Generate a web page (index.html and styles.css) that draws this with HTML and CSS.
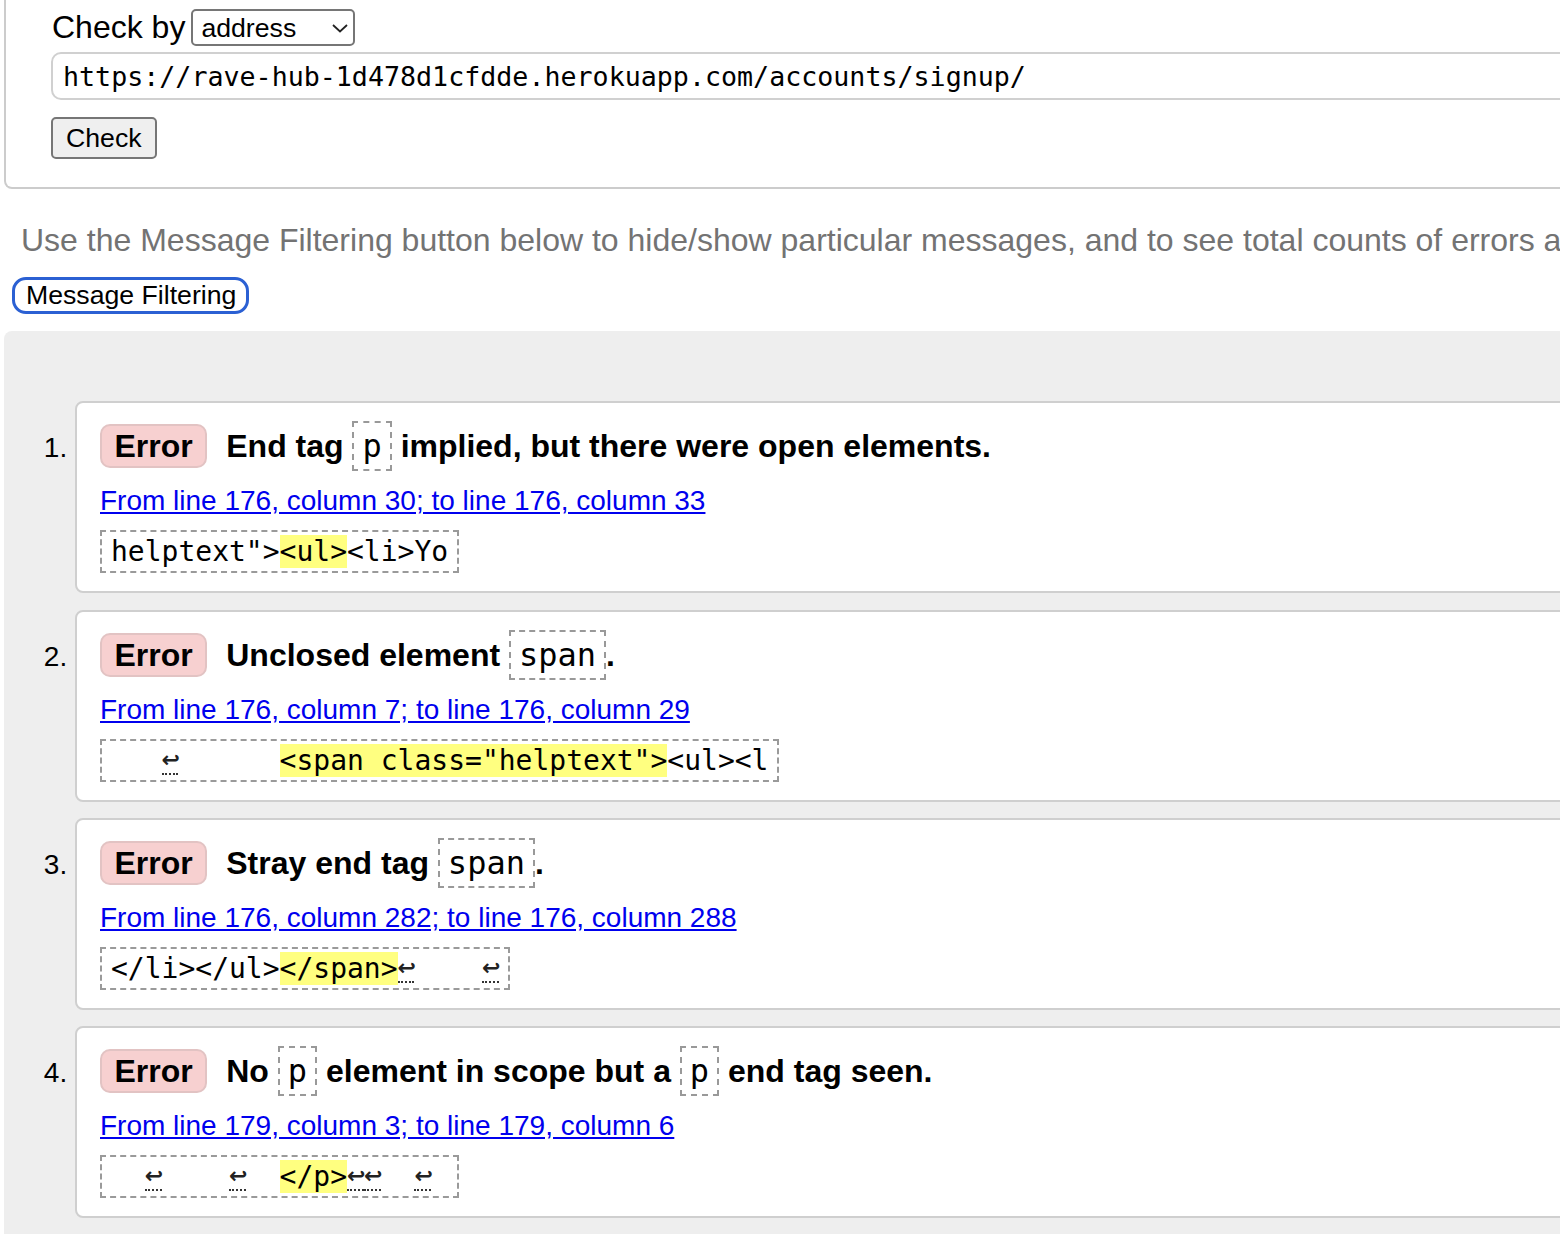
FILE: index.html
```html
<!DOCTYPE html>
<html lang="en">
<head>
<meta charset="utf-8">
<title>Nu Html Checker</title>
<link rel="stylesheet" href="styles.css">
</head>
<body>
<form class="checkform">
  <div class="checkby">
    <label class="checkby-label" for="docselect">Check by</label>
    <span class="selectwrap">
      <select id="docselect" class="doc-select">
        <option>address</option>
      </select>
      <svg class="chevron" width="16" height="9" viewBox="0 0 16 9"><path d="M1 1 L8 7.5 L15 1" fill="none" stroke="#222" stroke-width="1.8"/></svg>
    </span>
  </div>
  <input class="url" type="text" value="https://rave-hub-1d478d1cfdde.herokuapp.com/accounts/signup/">
  <button type="button" class="check-btn">Check</button>
</form>

<p class="note">Use the Message Filtering button below to hide/show particular messages, and to see total counts of errors and warnings.</p>
<button type="button" class="filter-btn">Message Filtering</button>

<div class="results">
  <ol class="messages">
    <li class="card">
      <p class="msg"><strong class="badge">Error</strong><span class="msg-text">End tag <code>p</code> implied, but there were open elements.</span></p>
      <p class="loc"><a href="#l176c33">From line 176, column 30; to line 176, column 33</a></p>
      <p class="extract"><code>helptext"&gt;<mark class="hl">&lt;ul&gt;</mark>&lt;li&gt;Yo</code></p>
    </li>
    <li class="card">
      <p class="msg"><strong class="badge">Error</strong><span class="msg-text">Unclosed element <code>span</code>.</span></p>
      <p class="loc"><a href="#l176c29">From line 176, column 7; to line 176, column 29</a></p>
      <p class="extract"><code>   <b class="lf" title="U+000A">↩</b>      <mark class="hl">&lt;span class="helptext"&gt;</mark>&lt;ul&gt;&lt;l</code></p>
    </li>
    <li class="card">
      <p class="msg"><strong class="badge">Error</strong><span class="msg-text">Stray end tag <code>span</code>.</span></p>
      <p class="loc"><a href="#l176c288">From line 176, column 282; to line 176, column 288</a></p>
      <p class="extract"><code>&lt;/li&gt;&lt;/ul&gt;<mark class="hl">&lt;/span&gt;</mark><b class="lf" title="U+000A">↩</b>    <b class="lf" title="U+000A">↩</b></code></p>
    </li>
    <li class="card">
      <p class="msg"><strong class="badge">Error</strong><span class="msg-text">No <code>p</code> element in scope but a <code>p</code> end tag seen.</span></p>
      <p class="loc"><a href="#l179c6">From line 179, column 3; to line 179, column 6</a></p>
      <p class="extract"><code>  <b class="lf" title="U+000A">↩</b>    <b class="lf" title="U+000A">↩</b>  <mark class="hl">&lt;/p&gt;</mark><b class="lf" title="U+000A">↩</b><b class="lf" title="U+000A">↩</b>  <b class="lf" title="U+000A">↩</b> </code></p>
    </li>
  </ol>
</div>
</body>
</html>
```

FILE: styles.css
```css
html {
  overflow: hidden;
  background: #fff;
}

body {
  margin: 0 0 0 4px;
  width: 2400px;
  font-family: "Liberation Sans", Arial, sans-serif;
  color: #000;
}

/* ---------- form ---------- */
.checkform {
  margin: 0;
  border: 2px solid #cccccc;
  border-top: 0;
  border-radius: 0 0 8px 8px;
  padding: 9px 0 28px 46px;
}

.checkby {
  display: flex;
  align-items: center;
  height: 37px;
}

.checkby-label {
  font-size: 32px;
  line-height: 36px;
  margin-top: -1px;
}

.selectwrap {
  position: relative;
  display: inline-block;
  margin-left: 6px;
  height: 37px;
}

.doc-select {
  -webkit-appearance: none;
  appearance: none;
  box-sizing: border-box;
  width: 164px;
  height: 37px;
  margin: 0;
  padding: 0 0 0 8px;
  border: 2px solid #767676;
  border-radius: 5px;
  background: #fff;
  color: #000;
  font-family: "Liberation Sans", Arial, sans-serif;
  font-size: 26.67px;
}

.chevron {
  position: absolute;
  right: 7px;
  top: 15px;
  pointer-events: none;
}

.url {
  display: block;
  box-sizing: border-box;
  width: 2300px;
  height: 48px;
  margin: 6px 0 0 -1px;
  padding: 0 10px;
  border: 2px solid #d0d0d0;
  border-radius: 10px;
  background: #fff;
  color: #000;
  font-family: "DejaVu Sans Mono", Menlo, monospace;
  font-size: 26.67px;
  outline: none;
}

.check-btn {
  display: block;
  box-sizing: border-box;
  height: 42px;
  margin: 17px 0 0 -1px;
  padding: 0 13px;
  border: 2px solid #767676;
  border-radius: 5px;
  background: #efefef;
  color: #000;
  font-family: "Liberation Sans", Arial, sans-serif;
  font-size: 26.67px;
}

/* ---------- note + filter ---------- */
.note {
  margin: 32.5px 0 0 17px;
  font-size: 32px;
  line-height: normal;
  color: #737373;
  white-space: nowrap;
}

.filter-btn {
  display: block;
  box-sizing: border-box;
  height: 37px;
  margin: 18.7px 0 0 8px;
  padding: 0 10px 0 11px;
  border: 3px solid #2b60d3;
  border-radius: 14px;
  background: #fff;
  color: #000;
  font-family: "Liberation Sans", Arial, sans-serif;
  font-size: 26.67px;
}

/* ---------- results ---------- */
.results {
  margin-top: 17px;
  background: #eeeeee;
  border-radius: 8px 0 0 0;
  padding: 70px 0 40px 71px;
}

.messages {
  margin: 0;
  padding: 0;
  list-style: decimal outside;
}

.card {
  font-size: 28px;
  background: #fff;
  border: 2px solid #cfcfcf;
  border-radius: 8px;
  padding: 21px 0 18px 23px;
}

.card + .card {
  margin-top: 16.33px;
}

.card::marker {
  font-family: "Liberation Sans", Arial, sans-serif;
  font-size: 28px;
  color: #000;
}

.msg {
  margin: 0;
  font-size: 32px;
  font-weight: bold;
  line-height: 36px;
  white-space: nowrap;
}

.badge {
  display: inline-block;
  line-height: 36px;
  padding: 2px 12.5px;
  margin-right: 19px;
  border: 2px solid #e2c3c3;
  border-radius: 10px;
  background: #f7d0d0;
}

.msg code {
  font-family: "DejaVu Sans Mono", Menlo, monospace;
  font-size: 32px;
  font-weight: normal;
  padding: 4px 8px;
  border: 2px dashed #999;
}

.loc {
  margin: 17px 0 0;
  line-height: 32px;
}

.loc a {
  color: #0000ee;
  text-decoration: underline;
}

.extract {
  display: block;
  width: fit-content;
  margin: 13px 0 0 0;
  padding: 3px 9px;
  border: 2px dashed #9a9a9a;
  line-height: 33px;
}

.extract code {
  font-family: "DejaVu Sans Mono", Menlo, monospace;
  font-size: 28px;
  white-space: pre;
}

.hl {
  background: #ffff80;
  color: #000;
}

.lf {
  display: inline-block;
  width: 16.86px;
  text-align: center;
  font-family: "DejaVu Sans", sans-serif;
  font-size: 22px;
  font-weight: bold;
  line-height: 20px;
  vertical-align: 3px;
  padding-bottom: 3px;
  color: #222;
  border-bottom: 2px dotted #333;
}
```
